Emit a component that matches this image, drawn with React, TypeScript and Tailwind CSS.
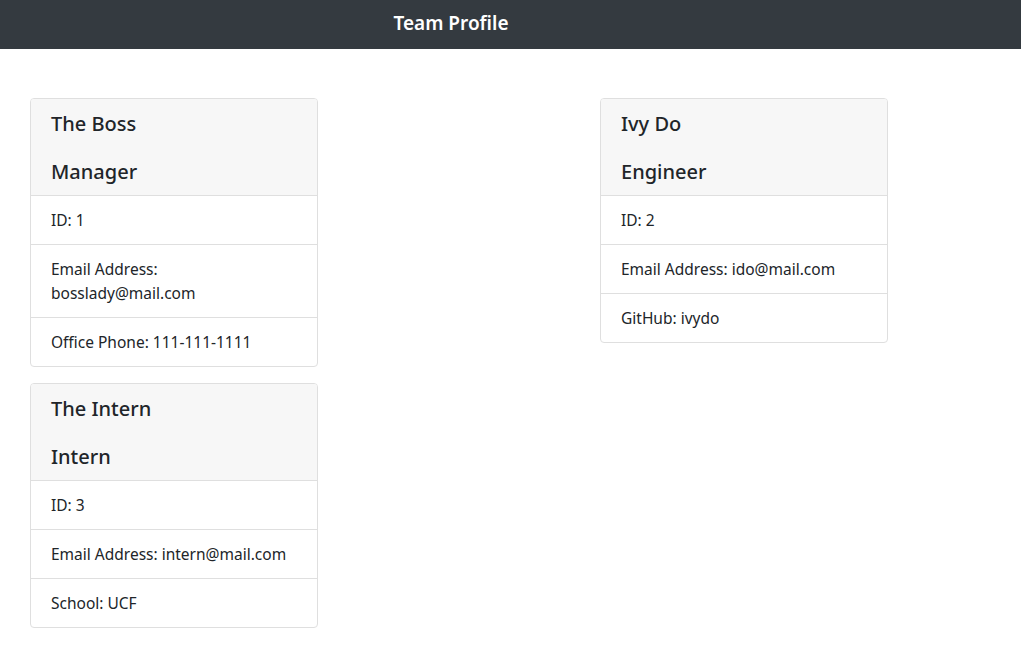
const team = {
  left: [
    {
      name: 'The Boss',
      role: 'Manager',
      rows: ['ID: 1', 'Email Address: bosslady@mail.com', 'Office Phone: 111-111-1111'],
    },
    {
      name: 'The Intern',
      role: 'Intern',
      rows: ['ID: 3', 'Email Address: intern@mail.com', 'School: UCF'],
    },
  ],
  right: [
    {
      name: 'Ivy Do',
      role: 'Engineer',
      rows: ['ID: 2', 'Email Address: ido@mail.com', 'GitHub: ivydo'],
    },
  ],
}

type Member = { name: string; role: string; rows: string[] }

function MemberCard({ member }: { member: Member }) {
  return (
    <div className="w-[288px] border border-[#dfdfdf] rounded-[4px] overflow-hidden bg-white">
      <div className="bg-[#f7f7f7] border-b border-[#dfdfdf] px-5 pt-[1px]">
        <h5 className="text-[20px] leading-[24px] font-medium py-3">{member.name}</h5>
        <h5 className="text-[20px] leading-[24px] font-medium pt-3 pb-[11px]">{member.role}</h5>
      </div>
      <ul className="divide-y divide-[#dfdfdf]">
        {member.rows.map((row) => (
          <li key={row} className="px-5 py-3 text-[15.5px] leading-[24px]">
            {row}
          </li>
        ))}
      </ul>
    </div>
  )
}

export default function App() {
  return (
    <div
      className="min-h-[670px] bg-white text-[#212529]"
      style={{ fontFamily: '"Segoe UI", "Noto Sans", sans-serif' }}
    >
      {/* Barra superior */}
      <div className="h-[49px] bg-[#343a40] flex items-center">
        <div className="w-[902px] flex justify-center pb-[3px]">
          <h1 className="text-[19px] font-semibold text-white">Team Profile</h1>
        </div>
      </div>

      {/* Cartões da equipe */}
      <div className="flex gap-[282px] px-[30px] pt-[49px]">
        <div className="flex flex-col gap-4">
          {team.left.map((m) => (
            <MemberCard key={m.name} member={m} />
          ))}
        </div>
        <div className="flex flex-col gap-4">
          {team.right.map((m) => (
            <MemberCard key={m.name} member={m} />
          ))}
        </div>
      </div>
    </div>
  )
}
